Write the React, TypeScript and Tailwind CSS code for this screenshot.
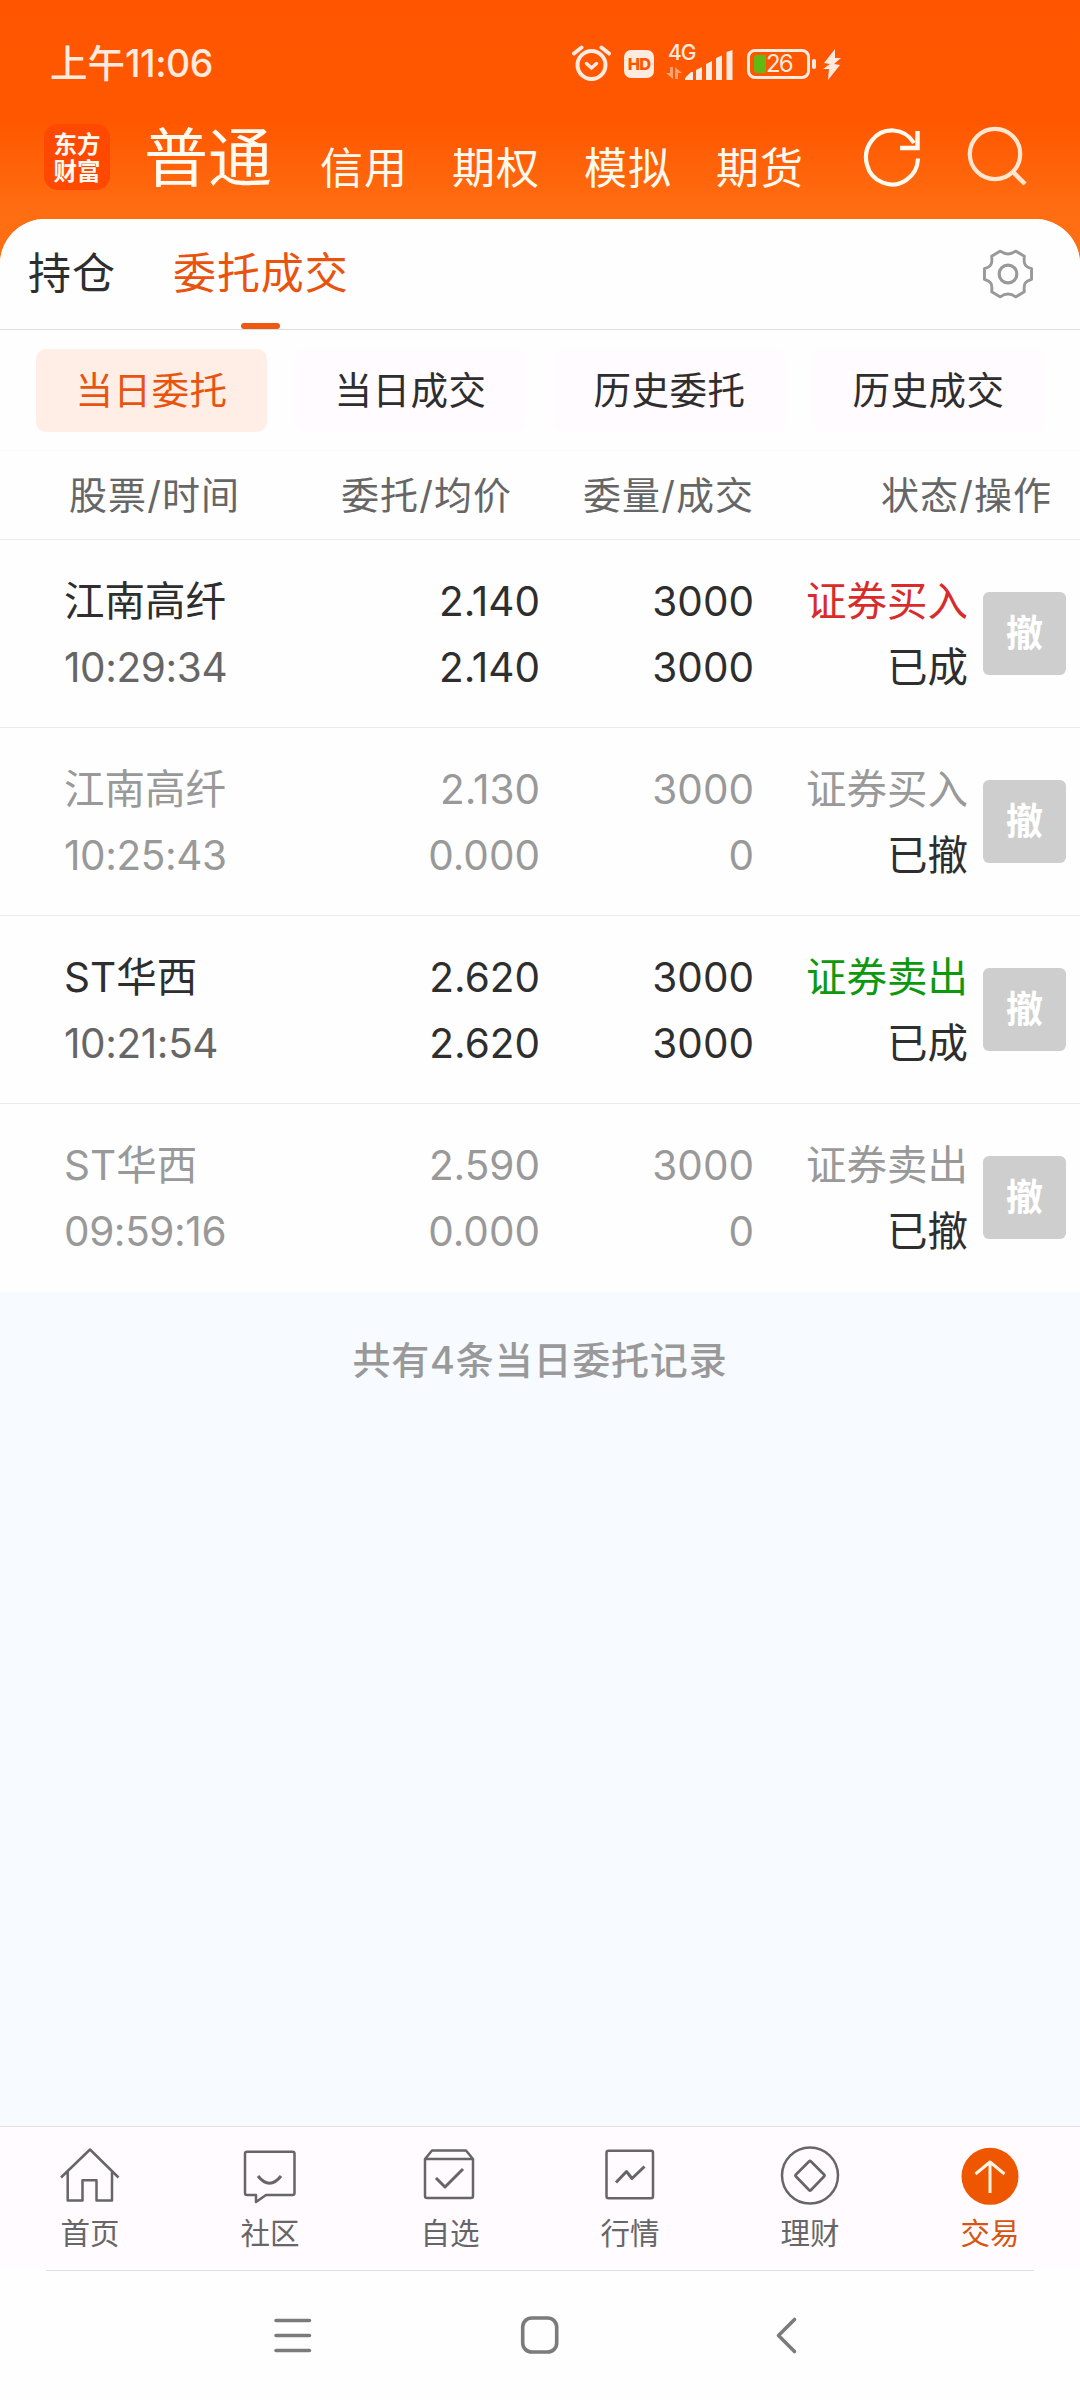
import type { ReactNode } from "react";

type Order = {
  name: string;
  time: string;
  price: string;
  avg: string;
  qty: string;
  done: string;
  side: string;
  sideColor: string;
  state: string;
  active: boolean;
};

const orders: Order[] = [
  { name: "江南高纤", time: "10:29:34", price: "2.140", avg: "2.140", qty: "3000", done: "3000", side: "证券买入", sideColor: "text-[#d92b2b]", state: "已成", active: true },
  { name: "江南高纤", time: "10:25:43", price: "2.130", avg: "0.000", qty: "3000", done: "0", side: "证券买入", sideColor: "text-[#999999]", state: "已撤", active: false },
  { name: "ST华西", time: "10:21:54", price: "2.620", avg: "2.620", qty: "3000", done: "3000", side: "证券卖出", sideColor: "text-[#0d980d]", state: "已成", active: true },
  { name: "ST华西", time: "09:59:16", price: "2.590", avg: "0.000", qty: "3000", done: "0", side: "证券卖出", sideColor: "text-[#999999]", state: "已撤", active: false },
];

function StatusBar() {
  return (
    <div className="flex h-[126px] items-start pt-[44px] text-[#ffeadf]">
      <div className="ml-[50px] w-[522px] text-[37.500px] leading-[40px] font-medium whitespace-nowrap">
        上午<span className="tracking-[-0.5px]">11:06</span>
      </div>
      <svg className="h-[38px] w-[39px]" viewBox="0 0 39 38" fill="none" stroke="currentColor" strokeLinecap="round">
        <circle cx="19.500" cy="21" r="14" strokeWidth="4" />
        <path d="M14.500 19.500l5 4.500 5-4.500" strokeWidth="3.500" />
        <path d="M2 9.500L9.500 3.500M37 9.500L29.500 3.500" strokeWidth="4" />
      </svg>
      <div className="mt-[6px] ml-[13px] flex h-[28px] w-[30px] items-center justify-center rounded-[7px] bg-[#ffeadf] text-[16.500px] leading-none font-extrabold tracking-[-0.8px] text-[#ff5500]">
        HD
      </div>
      <div className="ml-[14px] h-[40px] w-[28px]">
        <div className="h-[20px] text-[21px] leading-[18px] font-medium tracking-[-1px]">4G</div>
        <svg className="mt-[3px] -ml-[2px] h-[12px] w-[16px] opacity-50" viewBox="0 0 16 12" fill="currentColor">
          <path d="M4 0h3v12L0 6h4zM9 0l7 6h-4v6H9z" />
        </svg>
      </div>
      <svg className="-ml-[11px] h-[36px] w-[48px]" viewBox="0 0 48 36" fill="currentColor">
        <path d="M6 28h2v8H0v-2z" />
        <path d="M17 23v13h-6V26zM27 17v19h-6V20zM37 11.500v24.500h-6V14zM47.500 6v30h-6V8z" />
      </svg>
      <div className="mt-[5px] ml-[14px] flex h-[30px] w-[63px] items-center rounded-[8px] border-3 border-[#ffeadf] pl-[4px]">
        <div className="h-[18px] w-[12px] shrink-0 rounded-l-[3px] bg-[#62b814]" />
        <div className="text-[24px] leading-[24px] tracking-[-1.8px]">26</div>
      </div>
      <div className="mt-[15px] ml-[2px] h-[10px] w-[4px] rounded-[2px] bg-[#ffeadf]" />
      <svg className="mt-[5px] ml-[7px] h-[31px] w-[18px]" viewBox="0 0 18 31" fill="currentColor">
        <path d="M12 0L1 14l6 1-7 5h6L5 31l12-15-6-1 7-6h-6z" />
      </svg>
    </div>
  );
}

function Header() {
  return (
    <div className="flex h-[93px] items-start text-[#fffaf0]">
      <div className="-mt-[2px] ml-[44px] flex h-[66px] w-[66px] items-center justify-center rounded-[14px] bg-[#ff4800] font-['Noto_Sans_CJK_SC'] text-[23.500px] leading-[27.500px] font-bold">
        <p>
          东方
          <br />
          财富
        </p>
      </div>
      <div className="ml-[34px] w-[176px] text-[64px] leading-[64px] whitespace-nowrap">普通</div>
      <div className="flex gap-[44px] pt-[20px] text-[43px] leading-[44px] tracking-[1px] whitespace-nowrap">
        <span>信用</span>
        <span>期权</span>
        <span>模拟</span>
        <span>期货</span>
      </div>
      <svg className="mt-[2px] ml-[59px] h-[60px] w-[60px] shrink-0" viewBox="0 0 60 60" fill="none" stroke="currentColor" strokeWidth="4.200">
        <path d="M55 30.500A26 27 0 1 1 51 15" />
        <path d="M54.500 3v17H37" strokeWidth="4.500" />
      </svg>
      <svg className="ml-[46px] h-[62px] w-[60px] shrink-0 overflow-visible text-[#ffe6d0]" viewBox="0 0 60 62" fill="none" stroke="currentColor" strokeWidth="4.200">
        <circle cx="26" cy="28" r="25.200" />
        <path d="M43 45L56 58" strokeWidth="4.500" />
      </svg>
    </div>
  );
}

function Tabs() {
  return (
    <div className="flex h-[111px] items-start border-b border-[#dedede] text-[43px] leading-[44px] tracking-[0.9px] whitespace-nowrap">
      <span className="mt-[32px] ml-[28px] w-[145px] text-[#2e2e2e]">持仓</span>
      <div className="flex h-[110px] w-[178px] flex-col pt-[32px] text-[#e85410]">
        <span>委托成交</span>
        <div className="mt-auto ml-[68px] h-[6px] w-[39px] rounded-[3px] bg-[#ef5811]" />
      </div>
      <svg className="mt-[30px] mr-[47px] ml-auto h-[50px] w-[50px]" viewBox="0 0 52 52" fill="none" stroke="#999999" strokeWidth="3" strokeLinejoin="round">
        <path d="M18 2.200Q26 8 34 2.200L43 7.500C42 15.500 43.500 18.500 50.500 20.500V31.500C43.500 33.500 42 36.500 43 44.500L34 49.800Q26 44 18 49.800L9 44.500C10 36.500 8.500 33.500 1.500 31.500V20.500C8.500 18.500 10 15.500 9 7.500Z" />
        <circle cx="26" cy="26" r="9.200" strokeWidth="3.300" />
      </svg>
    </div>
  );
}

function Filters() {
  return (
    <div className="flex h-[121px] gap-[28px] border-b border-[#fafafa] px-[36px] pt-[19px] text-[37.500px] tracking-[0.5px] whitespace-nowrap text-[#2e2e2e]">
      <div className="flex h-[83px] w-[231px] items-center justify-center rounded-[10px] bg-[#ffeee6] pt-[2px] text-[#e85410]">当日委托</div>
      <div className="flex h-[83px] w-[231px] items-center justify-center rounded-[10px] bg-[#fffbff] pt-[2px]">当日成交</div>
      <div className="flex h-[83px] w-[231px] items-center justify-center rounded-[10px] bg-[#fffbff] pt-[2px]">历史委托</div>
      <div className="flex h-[83px] w-[231px] items-center justify-center rounded-[10px] bg-[#fffbff] pt-[2px]">历史成交</div>
    </div>
  );
}

function Columns() {
  return (
    <div className="flex h-[89px] items-center border-b border-[#ebebeb] pl-[69px] text-[38px] tracking-[1.1px] whitespace-nowrap text-[#666666]">
      <span className="w-[272px]">股票/时间</span>
      <span className="w-[242px]">委托/均价</span>
      <span className="w-[298px]">委量/成交</span>
      <span>状态/操作</span>
    </div>
  );
}

function OrderRow({ order, last }: { order: Order; last: boolean }) {
  const main = order.active ? "text-[#2e2e2e]" : "text-[#999999]";
  const sub = order.active ? "text-[#666666]" : "text-[#999999]";
  return (
    <div className={`flex h-[188px] items-center border-b text-[40.500px] leading-[66px] whitespace-nowrap ${last ? "border-transparent" : "border-[#ebebeb]"}`}>
      <div className={`w-[290px] pt-[2px] pl-[64px] ${main}`}>
        <div>{order.name}</div>
        <div className={`tracking-[-0.4px] ${sub}`}>{order.time}</div>
      </div>
      <div className={`w-[250px] pt-[2px] text-right ${main}`}>
        <div>{order.price}</div>
        <div>{order.avg}</div>
      </div>
      <div className={`w-[214px] pt-[2px] text-right ${main}`}>
        <div>{order.qty}</div>
        <div>{order.done}</div>
      </div>
      <div className="w-[214px] pt-[2px] text-right">
        <div className={order.sideColor}>{order.side}</div>
        <div className="text-[#2e2e2e]">{order.state}</div>
      </div>
      <div className="ml-[15px] flex h-[83px] w-[83px] items-center justify-center rounded-[6px] bg-[#cecece] text-[37px] leading-none font-bold text-white">撤</div>
    </div>
  );
}

function NavItem({ label, active, children }: { label: string; active?: boolean; children: ReactNode }) {
  return (
    <div className={`flex w-[180px] flex-col items-center pt-[18px] text-[29.500px] leading-[40px] ${active ? "text-[#d85510]" : "text-[#666666]"}`}>
      <svg className="h-[64px] w-[64px]" viewBox="0 0 64 64" fill="none" stroke="currentColor" strokeWidth="2.500" strokeLinejoin="round">
        {children}
      </svg>
      <span className="mt-[4px]">{label}</span>
    </div>
  );
}

function BottomNav() {
  return (
    <div className="flex h-[144px] flex-col border-t border-[#e0e0e0] bg-[#fffbff]">
      <div className="flex h-[143px]">
        <NavItem label="首页">
          <path d="M3 32.500L32 4.500 60.500 32.500M9.700 27v28.500H24.500V35.300h14v20.200H54V27" />
        </NavItem>
        <NavItem label="社区">
          <path d="M9 6.700H54.500Q56.500 6.700 56.500 8.700V48Q56.500 50 54.500 50H28L18 57V50H9Q7 50 7 48V8.700Q7 6.700 9 6.700Z" />
          <path d="M20 31Q31.500 45.500 43 31" strokeWidth="3" />
        </NavItem>
        <NavItem label="自选">
          <path d="M7 14L14 5.500H48L55 14V51Q55 53 53 53H9Q7 53 7 51ZM7 14H55" />
          <path d="M18 33L27 42 45 24" strokeWidth="3" />
        </NavItem>
        <NavItem label="行情">
          <rect x="8.500" y="5.700" width="46.500" height="47.500" rx="2" />
          <path d="M18 37.500L28.500 26.500 34 33.500 46.500 21.500" strokeWidth="3" />
        </NavItem>
        <NavItem label="理财">
          <circle cx="32" cy="30.500" r="28" />
          <path d="M31 16.500Q32 15.500 33 16.500L46 29.500Q47 30.500 46 31.500L33 45Q32 46 31 45L18 31.500Q17 30.500 18 29.500Z" strokeWidth="2.700" />
        </NavItem>
        <NavItem label="交易" active>
          <circle cx="32" cy="31.300" r="28.500" fill="#ee5600" stroke="none" />
          <path d="M32 48V18M17.500 29L32 17 46.500 29" stroke="#fff3e4" strokeWidth="3" />
        </NavItem>
      </div>
    </div>
  );
}

function SystemNav() {
  return (
    <div className="flex h-[130px] flex-col bg-[#fefefe]">
      <div className="mx-[46px] h-px bg-[#dedede]" />
      <div className="flex pt-[44px] text-[#7b7b7b]">
        <svg className="ml-[272px] h-[40px] w-[40px]" viewBox="0 0 40 40" fill="none" stroke="currentColor" strokeWidth="3.600" strokeLinecap="round">
          <path d="M4 5.500H37.500M4 20.500H37.500M4 35.500H37.500" />
        </svg>
        <svg className="ml-[207px] h-[40px] w-[40px]" viewBox="0 0 40 40" fill="none" stroke="currentColor" strokeWidth="3.600">
          <rect x="3.700" y="3" width="34" height="34" rx="9" />
        </svg>
        <svg className="ml-[215px] h-[40px] w-[24px]" viewBox="0 0 24 40" fill="none" stroke="currentColor" strokeWidth="3.600" strokeLinecap="round" strokeLinejoin="round">
          <path d="M20.500 4.500L4.500 20.500 20.500 36.500" />
        </svg>
      </div>
    </div>
  );
}

export default function App() {
  return (
    <div className="flex h-[2400px] w-[1080px] flex-col overflow-hidden bg-[linear-gradient(to_bottom,#ff5500_0,#ff5700_120px,#ff6d12_210px,#ff6f14_270px)] font-['Inter','Noto_Sans_CJK_SC',sans-serif]">
      <StatusBar />
      <Header />
      <div className="flex flex-1 flex-col overflow-hidden rounded-t-[45px] bg-[#f7faff]">
        <div className="bg-[#fefefe]">
          <Tabs />
          <Filters />
          <Columns />
          {orders.map((order, i) => (
            <OrderRow key={order.time} order={order} last={i === orders.length - 1} />
          ))}
        </div>
        <div className="flex-1 pt-[46px] text-center text-[38px] leading-[44px] font-medium tracking-[0.8px] text-[#999999]">共有4条当日委托记录</div>
        <BottomNav />
        <SystemNav />
      </div>
    </div>
  );
}
